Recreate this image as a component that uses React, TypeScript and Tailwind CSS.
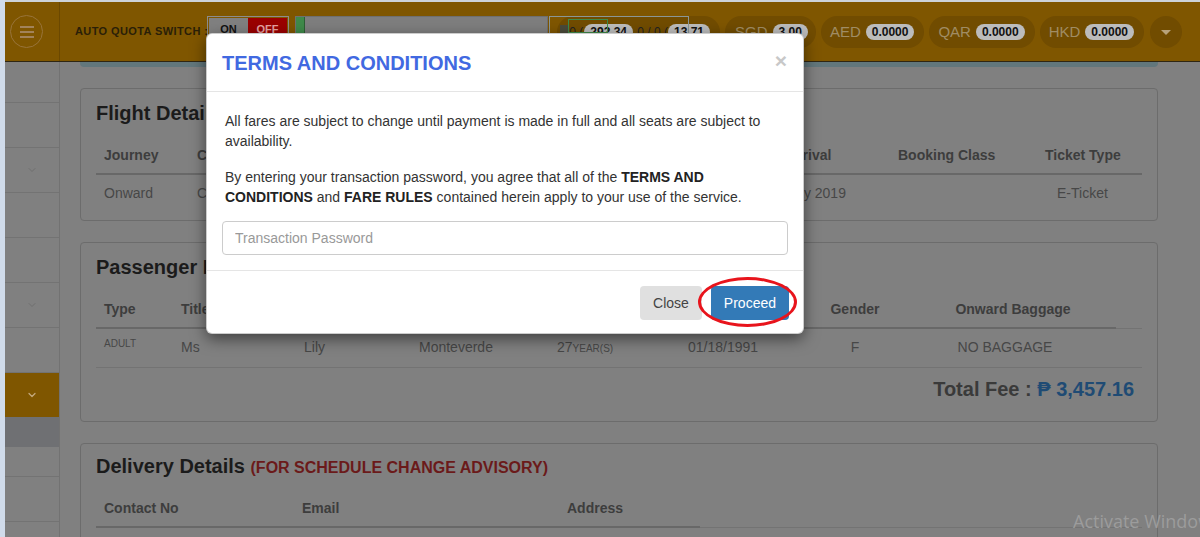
import { ChevronDown } from 'lucide-react';

const FLIGHT_COLS = 'grid grid-cols-[93px_140px_120px_330px_111px_147px_105px]';
const PAX_COLS = 'grid grid-cols-[77px_123px_115px_138px_131px_120px_110px_206px_26px]';
const DELIVERY_COLS = 'grid grid-cols-[198px_265px_141px_442px]';

const CURRENCIES = [
  { code: 'AED', value: '0.0000' },
  { code: 'QAR', value: '0.0000' },
  { code: 'HKD', value: '0.0000' },
];

const SIDEBAR = [
  { h: 'h-[41px]', chevron: false },
  { h: 'h-[45px]', chevron: false },
  { h: 'h-[45px]', chevron: true },
  { h: 'h-[45px]', chevron: false },
  { h: 'h-[45px]', chevron: false },
  { h: 'h-[45px]', chevron: true },
  { h: 'h-[45px]', chevron: false },
];

function Badge({ children }: { children: React.ReactNode }) {
  return (
    <span className="inline-block h-[16px] px-[6px] rounded-full bg-[#bcbcbc] text-[#111] text-[12px] leading-[16px] font-bold whitespace-nowrap">
      {children}
    </span>
  );
}

function TopBar() {
  return (
    <div className="relative h-[60px] bg-[#7f5600] border-b border-[#2f2612] flex items-start">
      {/* hamburger */}
      <div className="w-[55px] h-full border-r border-[#6b4800] flex items-center pl-[5px]">
        <div className="w-[33px] h-[33px] rounded-full border border-[#98743a] flex flex-col items-center justify-center gap-[3px]">
          <span className="block w-[14px] h-[2px] bg-[#a2835a]" />
          <span className="block w-[14px] h-[2px] bg-[#a2835a]" />
          <span className="block w-[14px] h-[2px] bg-[#a2835a]" />
        </div>
      </div>

      <div className="flex items-start pt-[14px] pl-[15px]">
        <span className="w-[128px] mt-[7px] whitespace-nowrap text-[11px] font-bold tracking-[0.4px] text-[#2a1f08]">AUTO QUOTA SWITCH :</span>
        {/* on / off */}
        <div className="ml-[4px] flex h-[27px] border border-[#8c8c8c] p-[1px]">
          <span className="w-[39px] bg-[#808080] text-[#111] text-[11px] font-bold flex items-center justify-center">ON</span>
          <span className="w-[39px] bg-[#9a0000] text-[#e4a0a0] text-[11px] font-bold flex items-center justify-center">OFF</span>
        </div>
        {/* quota progress */}
        <div className="ml-[6px] flex h-[27px] w-[253px] border border-[#6f6f6f] bg-[#7e7e7e]">
          <span className="w-[9px] h-full bg-[#3f8a4a] border-r border-[#2d5f34]" />
        </div>
        {/* currency pills */}
        <div className="ml-[9px] flex items-center gap-[5px]">
          <div className="relative flex h-[32px] items-center">
            <div className="flex h-[32px] w-[80px] items-center justify-end pr-[4px] rounded-l-full bg-[#714c00] text-[12px] text-[#222] whitespace-nowrap overflow-hidden">
              <span className="mr-[1px]">0.(</span>
              <Badge>292.34</Badge>
            </div>
            <div className="flex h-[32px] w-[83px] items-center justify-end pr-[10px] rounded-r-full bg-[#714c00] text-[12px] text-[#222] whitespace-nowrap overflow-hidden">
              <span>)0 / 0.(</span>
              <Badge>13.71</Badge>
            </div>
            {/* balance dropdown box overlay */}
            <div className="absolute left-[-8px] top-0 w-[140px] h-[32px] border border-[#8a9696] pointer-events-none">
              <span className="absolute left-[10px] top-[8px] w-[8px] h-[8px] bg-[#4a4a3a]" />
              <span className="absolute left-[18px] top-[2px] w-[40px] h-[14px] border border-[#3f8a4a]" />
            </div>
          </div>
          <div className="flex h-[32px] items-center rounded-full bg-[#714c00] pl-[10px] pr-[8px] gap-[5px]">
            <span className="text-[15px] text-[#a08c64]">SGD</span>
            <Badge>3.00</Badge>
          </div>
          {CURRENCIES.map((c) => (
            <div key={c.code} className="flex h-[32px] items-center rounded-full bg-[#714c00] pl-[9px] pr-[10px] gap-[5px]">
              <span className="text-[15px] text-[#a08c64]">{c.code}</span>
              <Badge>{c.value}</Badge>
            </div>
          ))}
          <div className="ml-[1px] w-[32px] h-[32px] rounded-full bg-[#714c00] flex items-center justify-center">
            <span className="w-0 h-0 border-l-[5px] border-r-[5px] border-t-[5px] border-l-transparent border-r-transparent border-t-[#b8a27a]" />
          </div>
        </div>
      </div>
    </div>
  );
}

function Sidebar() {
  return (
    <div className="w-[55px] shrink-0 border-r border-[#727272] bg-[#808080] flex flex-col">
      {SIDEBAR.map((s, i) => (
        <div key={i} className={`${s.h} border-b border-[#737373] flex items-center justify-end pr-[21px]`}>
          {s.chevron && <ChevronDown className="w-[12px] h-[12px] text-[#6a6a6a]" strokeWidth={1.5} />}
        </div>
      ))}
      <div className="h-[44px] bg-[#7f5600] flex items-center justify-end pr-[21px]">
        <ChevronDown className="w-[12px] h-[12px] text-[#c4a97c]" strokeWidth={2.5} />
      </div>
      <div className="h-[30px] bg-[#6f7073]" />
      <div className="h-[30px] border-b border-[#737373]" />
      <div className="h-[45px] border-b border-[#737373]" />
    </div>
  );
}

function Th({ children, className = '' }: { children?: React.ReactNode; className?: string }) {
  return <div className={`px-[8px] pt-[8px] pb-[8px] leading-[20px] text-[14px] font-bold text-[#3d3d3d] ${className}`}>{children}</div>;
}

function Td({
  children,
  className = '',
  size = 'text-[14px] leading-[20px] pt-[8px]',
}: {
  children?: React.ReactNode;
  className?: string;
  size?: string;
}) {
  return <div className={`px-[8px] pb-[8px] text-[#474747] ${size} ${className}`}>{children}</div>;
}

function FlightCard() {
  return (
    <div className="border border-[#6c6c6c] rounded-[4px] px-[15px] pt-[10px] pb-[9px]">
      <h3 className="text-[20px] leading-[28px] font-bold text-[#1b1b1b]">Flight Details</h3>
      <div className={`${FLIGHT_COLS} mt-[10px]`}>
        <Th className="border-b-2 border-[#686868]">Journey</Th>
        <Th className="border-b-2 border-[#686868]">Carrier</Th>
        <Th className="border-b-2 border-[#686868]">Flight No</Th>
        <Th className="border-b-2 border-[#686868]">Departure</Th>
        <Th className="border-b-2 border-[#686868]">Arrival</Th>
        <Th className="border-b-2 border-[#686868]">Booking Class</Th>
        <Th className="border-b-2 border-[#686868]">Ticket Type</Th>
        <Td>Onward</Td>
        <Td>Cebu Pacific</Td>
        <Td>5J 560</Td>
        <Td>18 May 2019</Td>
        <Td className="-ml-[22px] whitespace-nowrap">18 May 2019</Td>
        <Td />
        <Td className="pl-[20px]">E-Ticket</Td>
      </div>
    </div>
  );
}

function PassengerCard() {
  const row = 'border-b border-[#737373]';
  return (
    <div className="border border-[#6c6c6c] rounded-[4px] px-[15px] pt-[10px] pb-[9px]">
      <h3 className="text-[20px] leading-[28px] font-bold text-[#1b1b1b]">Passenger Details</h3>
      <div className={`${PAX_COLS} mt-[10px]`}>
        <Th className="border-b-2 border-[#686868]">Type</Th>
        <Th className="border-b-2 border-[#686868]">Title</Th>
        <Th className="border-b-2 border-[#686868]">First Name</Th>
        <Th className="border-b-2 border-[#686868]">Last Name</Th>
        <Th className="border-b-2 border-[#686868]">Age</Th>
        <Th className="border-b-2 border-[#686868]">Date of Birth</Th>
        <Th className="border-b-2 border-[#686868] text-center">Gender</Th>
        <Th className="border-b-2 border-[#686868] text-center">Onward Baggage</Th>
        <Th className="border-b border-[#737373] pb-[9px]" />
        <Td className={row} size="text-[10px] leading-[12px] pt-[9px]">ADULT</Td>
        <Td className={row}>Ms</Td>
        <Td className={row}>Lily</Td>
        <Td className={row}>Monteverde</Td>
        <Td className={row}>
          27<span className="text-[10px]">YEAR(S)</span>
        </Td>
        <Td className={row}>01/18/1991</Td>
        <Td className={`${row} text-center`}>F</Td>
        <Td className={`${row} text-center pr-[24px]`}>NO BAGGAGE</Td>
        <Td className={row} />
      </div>
      <div className="flex justify-end pr-[8px] pt-[7px] pb-[9px] text-[20px] leading-[28px] font-bold">
        <span className="text-[#3a3a3a]">Total Fee :&nbsp;</span>
        <span className="text-[#1f4b74]">₱ 3,457.16</span>
      </div>
    </div>
  );
}

function DeliveryCard() {
  return (
    <div className="border border-[#6c6c6c] rounded-[4px] px-[15px] pt-[8px] pb-[10px]">
      <h3 className="text-[20px] leading-[28px] font-bold text-[#1b1b1b]">
        Delivery Details <span className="text-[16px] text-[#6b1a1a]">(FOR SCHEDULE CHANGE ADVISORY)</span>
      </h3>
      <div className={`${DELIVERY_COLS} mt-[8px]`}>
        <Th className="border-b-2 border-[#686868]">Contact No</Th>
        <Th className="border-b-2 border-[#686868]">Email</Th>
        <Th className="border-b-2 border-[#686868]">Address</Th>
        <Th className="border-b border-[#737373] pb-[9px]" />
        <Td>&nbsp;</Td>
      </div>
    </div>
  );
}

function TermsModal() {
  return (
    <div className="absolute left-[206px] top-[33px] w-[598px] bg-white rounded-[6px] border border-black/20 shadow-[0_5px_15px_rgba(0,0,0,0.5)]">
      <div className="flex items-start justify-between px-[15px] pt-[15px] pb-[14px] border-b border-[#e5e5e5]">
        <h4 className="text-[20px] leading-[28px] font-bold text-[#4169e1]">TERMS AND CONDITIONS</h4>
        <button className="mt-[1px] mr-[1px] text-[21px] leading-[21px] font-bold text-[#c8c8c8]">×</button>
      </div>
      <div className="px-[15px] pt-[19px] pb-[15px] text-[14px] leading-[20px] text-[#333]">
        <p className="pl-[3px] pr-[4px] mb-[16px]">
          All fares are subject to change until payment is made in full and all seats are subject to availability.
        </p>
        <p className="pl-[3px] pr-[4px] mb-[14px]">
          By entering your transaction password, you agree that all of the <b className="text-[#222]">TERMS AND CONDITIONS</b> and{' '}
          <b className="text-[#222]">FARE RULES</b> contained herein apply to your use of the service.
        </p>
        <input
          type="password"
          placeholder="Transaction Password"
          className="w-full h-[34px] px-[12px] border border-[#ccc] rounded-[4px] text-[14px] text-[#555] placeholder:text-[#999] outline-none"
        />
      </div>
      <div className="relative flex justify-end gap-[9px] px-[14px] pt-[15px] pb-[13px] border-t border-[#e5e5e5]">
        <button className="h-[34px] px-[13px] rounded-[4px] bg-[#e0e0e0] text-[14px] text-[#444]">Close</button>
        <button className="h-[34px] px-[13px] rounded-[4px] bg-[#337ab7] text-[14px] text-white">Proceed</button>
        <span className="absolute right-[6px] top-[6px] w-[99px] h-[50px] rounded-[50%] border-[3px] border-[#e8141c] pointer-events-none" />
      </div>
    </div>
  );
}

export default function App() {
  return (
    <div className="relative w-[1200px] h-[537px] overflow-hidden bg-[#808080] flex font-['Liberation_Sans',Arial,sans-serif]">
      <div className="w-[5px] shrink-0 bg-[#d0dbea]" />
      <div className="flex-1 flex flex-col min-w-0">
        <div className="h-[2px] bg-[#cdd3d9]" />
        <TopBar />
        <div className="flex flex-1 min-h-0">
          <Sidebar />
          <main className="flex-1 pl-[20px] pr-[42px]">
            <div className="h-[5px] rounded-b-[4px] bg-[#62777c]" />
            <div className="flex flex-col gap-[21px] pt-[21px]">
              <FlightCard />
              <PassengerCard />
              <DeliveryCard />
            </div>
          </main>
        </div>
      </div>

      <TermsModal />

      <span className="absolute left-[1073px] top-[508px] whitespace-nowrap text-[18px] text-[#9c9c9c] font-['Open_Sans',sans-serif]">
        Activate Windows
      </span>
    </div>
  );
}
